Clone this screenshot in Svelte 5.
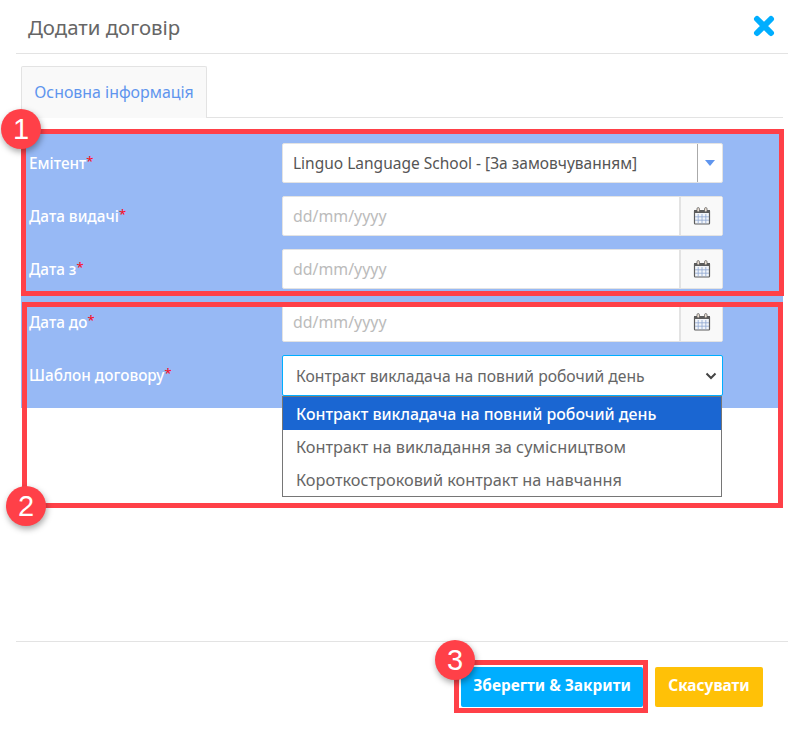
<script>
  const options = [
    'Контракт викладача на повний робочий день',
    'Контракт на викладання за сумісництвом',
    'Короткостроковий контракт на навчання'
  ];
  const dates = ['Дата видачі', 'Дата з', 'Дата до'];
</script>

{#snippet calendar()}
  <svg class="cal" viewBox="0 0 18 18" width="18" height="18" aria-hidden="true">
    <rect x="1.5" y="3.5" width="15" height="13.5" rx="0.8" fill="#f2f5fa" stroke="#5c5c5c" stroke-width="1.2" />
    <rect x="1" y="3" width="16" height="3" fill="#5c5c5c" />
    <path d="M5.2 7v9.5M9 7v9.5M12.8 7v9.5M2 9.8h14M2 13.2h14" stroke="#8ea6cf" stroke-width="0.8" fill="none" />
    <rect x="4" y="0.6" width="2.4" height="4.4" rx="1.2" fill="#f6e9dc" stroke="#5c5c5c" stroke-width="0.8" />
    <rect x="11.6" y="0.6" width="2.4" height="4.4" rx="1.2" fill="#f6e9dc" stroke="#5c5c5c" stroke-width="0.8" />
  </svg>
{/snippet}

<div class="page">
  <header class="head">
    <h1>Додати договір</h1>
    <button class="close" aria-label="Закрити">
      <svg viewBox="0 0 22 22" width="22" height="22">
        <path d="M4 4 18 18M18 4 4 18" stroke="#00aeff" stroke-width="6" stroke-linecap="round" />
      </svg>
    </button>
  </header>

  <nav class="tabs"><span class="tab">Основна інформація</span></nav>

  <section class="panel">
    <div class="row">
      <span class="label">Емітент<i>*</i></span>
      <div class="control sel2">
        <span class="val">Linguo Language School - [За замовчуванням]</span>
        <span class="arrow"><b></b></span>
      </div>
    </div>
    {#each dates as d}
      <div class="row">
        <span class="label">{d}<i>*</i></span>
        <div class="date">
          <span class="ph">dd/mm/yyyy</span>
          <span class="addon">{@render calendar()}</span>
        </div>
      </div>
    {/each}
    <div class="row last">
      <span class="label">Шаблон договору<i>*</i></span>
      <div class="control native">
        <span class="val">{options[0]}</span>
        <svg viewBox="0 0 12 8" width="12" height="8"><path d="M1.5 1.5 6 6l4.5-4.5" fill="none" stroke="#444" stroke-width="2" /></svg>
        <ul class="list">
          {#each options as o, i}
            <li class:on={i === 0}>{o}</li>
          {/each}
        </ul>
      </div>
    </div>
  </section>

  <footer class="foot">
    <button class="btn save">Зберегти &amp; Закрити</button>
    <button class="btn cancel">Скасувати</button>
  </footer>

  <div class="mark m1"></div>
  <div class="mark m2"></div>
  <div class="mark m3"></div>
  <div class="badge b1">1</div>
  <div class="badge b2">2</div>
  <div class="badge b3">3</div>
</div>

<style>
  :global(body) { margin: 0; background: #fff; }
  .page {
    position: relative;
    width: 806px;
    height: 729px;
    box-sizing: border-box;
    padding: 0 16px;
    overflow: hidden;
    font-family: "Noto Sans", "Open Sans", sans-serif;
    font-size: 15.7px;
    color: #666;
  }
  .head {
    height: 53px;
    box-sizing: content-box;
    border-bottom: 1px solid #e3e3e3;
    display: flex;
    align-items: center;
    justify-content: space-between;
    padding: 0 13px 0 12px;
    margin-right: -25px;
    width: 747px;
  }
  h1 { margin: 0; font-size: 20.4px; font-weight: 400; color: #666; line-height: 28px; }
  .close { border: 0; padding: 0; background: none; display: flex; margin-bottom: 2px; }
  .tabs {
    margin: 12px 5px 0;
    height: 51px;
    width: 762px;
    border-bottom: 1px solid #e3e3e3;
    display: flex;
  }
  .tab {
    width: 186px;
    height: 52px;
    box-sizing: border-box;
    background: #f9f9f9;
    border: 1px solid #e3e3e3;
    border-bottom: 0;
    border-radius: 2px 2px 0 0;
    color: #5f95ee;
    font-size: 15.9px;
    text-align: center;
    line-height: 50px;
  }
  .panel {
    margin: 12px 0 0 5px;
    width: 762px;
    height: 278px;
    box-sizing: border-box;
    background: #97b9f5;
    padding: 13px 0 0 8px;
    display: flex;
    flex-direction: column;
    gap: 13px;
  }
  .row { display: flex; height: 40px; align-items: flex-start; }
  .row.last { height: 41px; }
  .label {
    width: 253px;
    flex: none;
    color: #fff;
    font-size: 15.3px;
    font-weight: 500;
    line-height: 40px;
  }
  .label i { color: #f5142c; font-style: normal; font-size: 13px; position: relative; top: -3px; }
  .control, .date { width: 441px; height: 100%; box-sizing: border-box; display: flex; align-items: center; position: relative; }
  .sel2 { background: #fff; border: 1px solid #e3e3e3; border-radius: 2px; padding-left: 10px; color: #555; font-size: 15.5px; }
  .sel2 .val { flex: 1; }
  .arrow { width: 25px; height: 100%; border-left: 1px solid #aaa; box-sizing: border-box; display: flex; align-items: center; justify-content: center; }
  .arrow b { width: 0; height: 0; border: 5px solid transparent; border-top: 6px solid #5f95ee; border-bottom: 0; }
  .date { background: #fff; border: 1px solid #e3e3e3; border-radius: 2px; padding-left: 10px; }
  .ph { flex: 1; color: #bbb; font-size: 15.9px; }
  .addon { width: 43px; height: 100%; background: #f9f9f9; border-left: 2px solid #e3e3e3; box-sizing: border-box; display: flex; align-items: center; justify-content: center; }
  .cal { display: block; }
  .native { background: #fff; border: 1px solid #00aeff; border-radius: 2px; padding: 0 5px 0 13px; justify-content: space-between; color: #666; }
  .list {
    position: absolute;
    left: -1px;
    top: 40px;
    width: 440px;
    box-sizing: border-box;
    margin: 0;
    padding: 0;
    list-style: none;
    background: #fff;
    border: 1px solid #767676;
    z-index: 1;
  }
  .list li { height: 33px; line-height: 34px; padding-left: 13px; white-space: nowrap; font-size: 16.3px; }
  .list li.on { background: #1a66d2; color: #fff; font-weight: 500; font-size: 15.9px; }
  .foot {
    position: absolute;
    left: 16px;
    top: 641px;
    width: 772px;
    border-top: 1px solid #e3e3e3;
    padding: 25px 25px 0 0;
    box-sizing: border-box;
    display: flex;
    justify-content: flex-end;
    gap: 12px;
  }
  .btn {
    height: 40px;
    border: 0;
    border-radius: 2px;
    color: #fff;
    font: 700 15.4px/38px "Noto Sans", sans-serif;
    padding: 0 0 2px;
  }
  .save { width: 182px; background: #00aeff; }
  .cancel { width: 108px; background: #ffc107; }
  .mark { position: absolute; border: 5px solid #ff4048; box-sizing: border-box; pointer-events: none; }
  .m1 { left: 21px; top: 129px; width: 763px; height: 167px; }
  .m2 { left: 22px; top: 302px; width: 761px; height: 206px; }
  .m3 { left: 454px; top: 660px; width: 194px; height: 53px; }
  .badge {
    position: absolute;
    width: 40px;
    height: 40px;
    border-radius: 50%;
    background: #ff4048;
    color: #fff;
    font: 400 29px/40px "Liberation Sans", sans-serif;
    text-align: center;
    box-shadow: 1px 3px 6px rgba(0, 0, 0, 0.35);
  }
  .b1 { left: 1px; top: 109px; }
  .b2 { left: 6px; top: 486px; }
  .b3 { left: 435px; top: 640px; }
</style>
